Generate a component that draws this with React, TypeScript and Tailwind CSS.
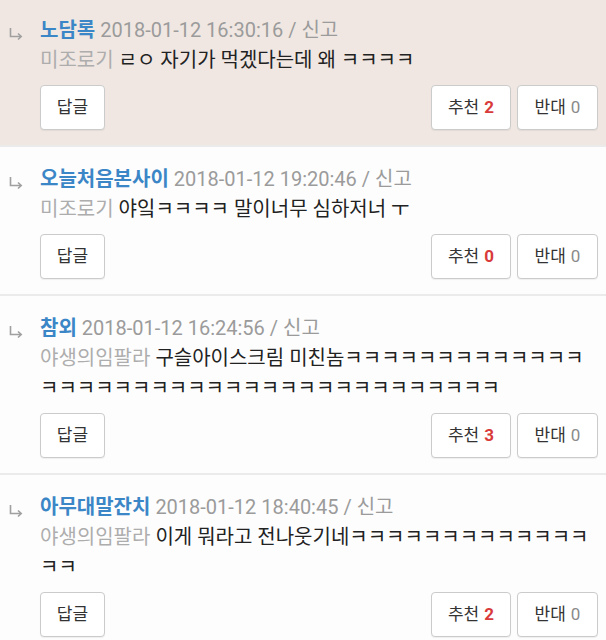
import React from "react";

type Reply = {
  nick: string;
  date: string;
  author: string;
  body: string;
  up: number;
  down: number;
  highlight?: boolean;
};

const replies: Reply[] = [
  {
    nick: "노담록",
    date: "2018-01-12 16:30:16",
    author: "미조로기",
    body: "ㄹㅇ 자기가 먹겠다는데 왜 ㅋㅋㅋㅋ",
    up: 2,
    down: 0,
    highlight: true,
  },
  {
    nick: "오늘처음본사이",
    date: "2018-01-12 19:20:46",
    author: "미조로기",
    body: "야잌ㅋㅋㅋㅋ 말이너무 심하저너 ㅜ",
    up: 0,
    down: 0,
  },
  {
    nick: "참외",
    date: "2018-01-12 16:24:56",
    author: "야생의임팔라",
    body: "구슬아이스크림 미친놈" + "ㅋ".repeat(38),
    up: 3,
    down: 0,
  },
  {
    nick: "아무대말잔치",
    date: "2018-01-12 18:40:45",
    author: "야생의임팔라",
    body: "이게 뭐라고 전나웃기네" + "ㅋ".repeat(15),
    up: 2,
    down: 0,
  },
];

function ReplyArrow() {
  return (
    <svg width="16" height="14" viewBox="0 0 16 14" fill="none" className="mt-[12px]">
      <path d="M2.5 1 V9.5 H13" stroke="#a0a0a0" strokeWidth="1.6" />
      <path d="M10 6.5 L13.2 9.5 L10 12.5" stroke="#a0a0a0" strokeWidth="1.6" fill="none" />
    </svg>
  );
}

function Btn({ children, className = "" }: { children: React.ReactNode; className?: string }) {
  return (
    <button
      className={`h-[45px] rounded-[4px] border border-[#cbcbcb] bg-white text-[17px] text-[#333] shadow-[0_1px_1px_rgba(0,0,0,0.06)] flex items-center justify-center ${className}`}
    >
      {children}
    </button>
  );
}

function ReplyRow({ r }: { r: Reply }) {
  return (
    <div
      className={`flex pl-[8px] pr-[8px] pt-[17px] pb-[15px] border-b-2 border-[#ebebeb] ${
        r.highlight ? "bg-[#f0e7e2]" : "bg-[#fdfdfd]"
      }`}
    >
      <div className="w-[32px] shrink-0">
        <ReplyArrow />
      </div>
      <div className="flex-1 min-w-0">
        <div className="text-[20px] leading-[30px] whitespace-nowrap">
          <span className="font-bold text-[#3b86c6]">{r.nick}</span>{" "}
          <span className="text-[#9b9b9b]">{r.date} / 신고</span>
        </div>
        <div className="text-[20px] leading-[30px] text-[#222] break-all">
          <span className="text-[#adadad]">{r.author}</span> {r.body}
        </div>
        <div className="mt-[10px] flex items-center">
          <Btn className="w-[65px]">답글</Btn>
          <div className="ml-auto flex gap-[6px]">
            <Btn className="w-[80px]">
              추천<span className="ml-[5px] font-bold text-[#d93a3a]">{r.up}</span>
            </Btn>
            <Btn className="w-[81px]">
              반대<span className="ml-[5px] text-[#8a8a8a]">{r.down}</span>
            </Btn>
          </div>
        </div>
      </div>
    </div>
  );
}

export default function App() {
  return (
    <div className="w-[606px] h-[640px] overflow-hidden bg-[#fdfdfd] [font-family:Roboto,'Noto_Sans_CJK_KR',sans-serif]">
      <div className="-mt-[2px]">
        {replies.map((r) => (
          <ReplyRow key={r.nick} r={r} />
        ))}
      </div>
    </div>
  );
}
